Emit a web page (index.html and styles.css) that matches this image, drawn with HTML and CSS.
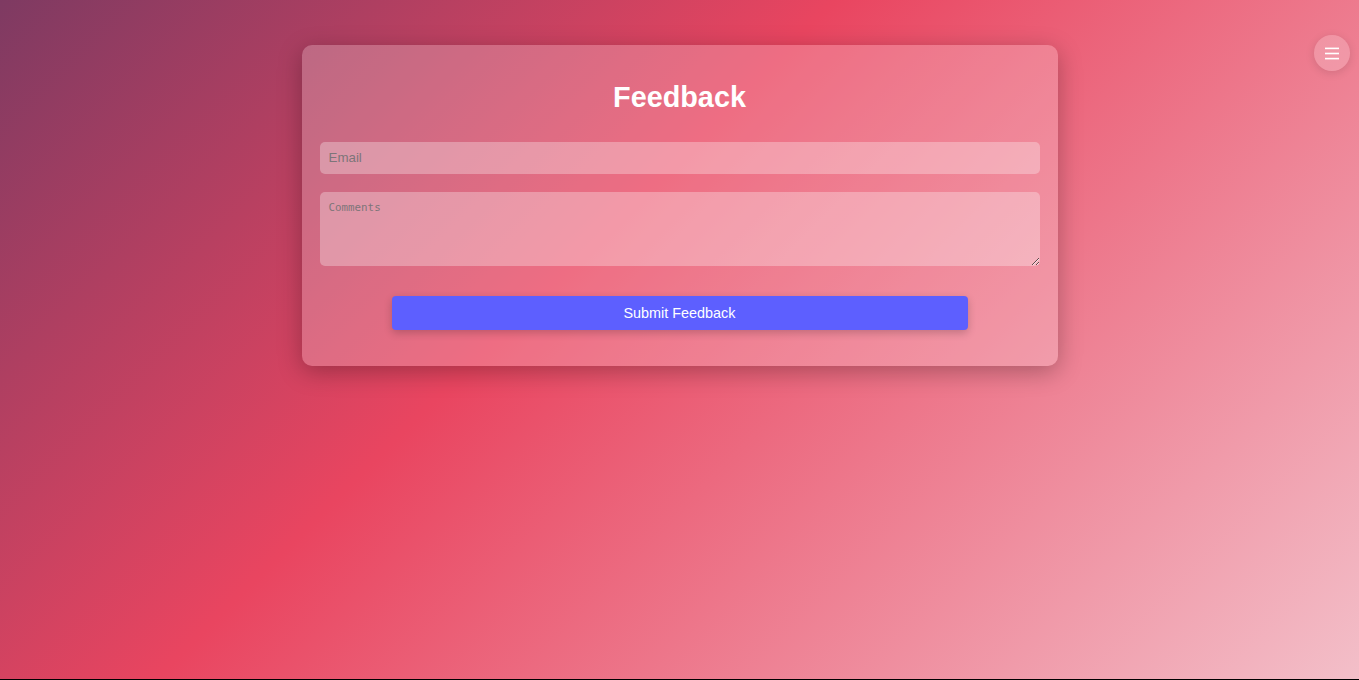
FILE: index.html
```html
<!DOCTYPE html>
<html lang="en">
<head>
<meta charset="utf-8">
<title>Feedback</title>
<link rel="stylesheet" href="styles.css">
</head>
<body>
<div class="page">
  <form class="card">
    <h1 class="title">Feedback</h1>
    <input class="field field-email" type="email" placeholder="Email">
    <textarea class="field field-comments" placeholder="Comments"></textarea>
    <button class="submit" type="button">Submit Feedback</button>
  </form>
</div>
<button class="menu-btn" type="button" aria-label="Menu">
  <svg width="14" height="13" viewBox="0 0 14 13" aria-hidden="true">
    <rect x="0" y="0.6" width="14" height="1.6" fill="#fff"/>
    <rect x="0" y="5.7" width="14" height="1.6" fill="#fff"/>
    <rect x="0" y="10.8" width="14" height="1.6" fill="#fff"/>
  </svg>
</button>
</body>
</html>
```

FILE: styles.css
```css
html {
  background: #000;
}

body {
  margin: 0;
  height: 679px;
  background: linear-gradient(135deg, #7e3a62 0%, #e94560 41%, #f3bfc9 100%);
  font-family: "Liberation Sans", Arial, sans-serif;
}

.page {
  display: flex;
  flex-direction: column;
  align-items: center;
  padding-top: 45px;
}

.card {
  width: 756px;
  box-sizing: border-box;
  padding: 36px 18px 36px;
  background: rgba(255, 255, 255, 0.22);
  border-radius: 10px;
  box-shadow: 0 6px 24px rgba(0, 0, 0, 0.28);
  display: flex;
  flex-direction: column;
  align-items: center;
}

.title {
  margin: 0 0 28px;
  font-size: 28.8px;
  line-height: 33px;
  font-weight: 700;
  color: #fff;
  text-align: center;
}

.field {
  width: 100%;
  box-sizing: border-box;
  border: none;
  outline: none;
  border-radius: 5px;
  background: rgba(255, 255, 255, 0.3);
  color: #333;
}

.field-email {
  height: 32px;
  padding: 7px 9px 9px;
  font-family: "Liberation Sans", Arial, sans-serif;
  font-size: 13.33px;
  margin-bottom: 18px;
}

.field-comments {
  height: 74px;
  padding: 9px 9px 7px;
  font-family: "DejaVu Sans Mono", "Liberation Mono", monospace;
  font-size: 10.83px;
  margin-bottom: 30px;
  display: block;
}

.field::placeholder {
  color: #7d7579;
}

.submit {
  width: 576px;
  height: 34px;
  padding: 0;
  border: none;
  border-radius: 4px;
  background: #5d5fff;
  color: #fff;
  font-family: "Liberation Sans", Arial, sans-serif;
  font-size: 14.4px;
  box-shadow: 0 3px 8px rgba(0, 0, 0, 0.2);
  cursor: pointer;
}

.menu-btn {
  position: fixed;
  top: 35px;
  right: 9px;
  width: 36px;
  height: 36px;
  padding: 0;
  border: none;
  border-radius: 50%;
  background: rgba(255, 255, 255, 0.2);
  box-shadow: 0 2px 10px rgba(0, 0, 0, 0.12);
  display: flex;
  align-items: center;
  justify-content: center;
}

.menu-btn svg {
  display: block;
}
```
